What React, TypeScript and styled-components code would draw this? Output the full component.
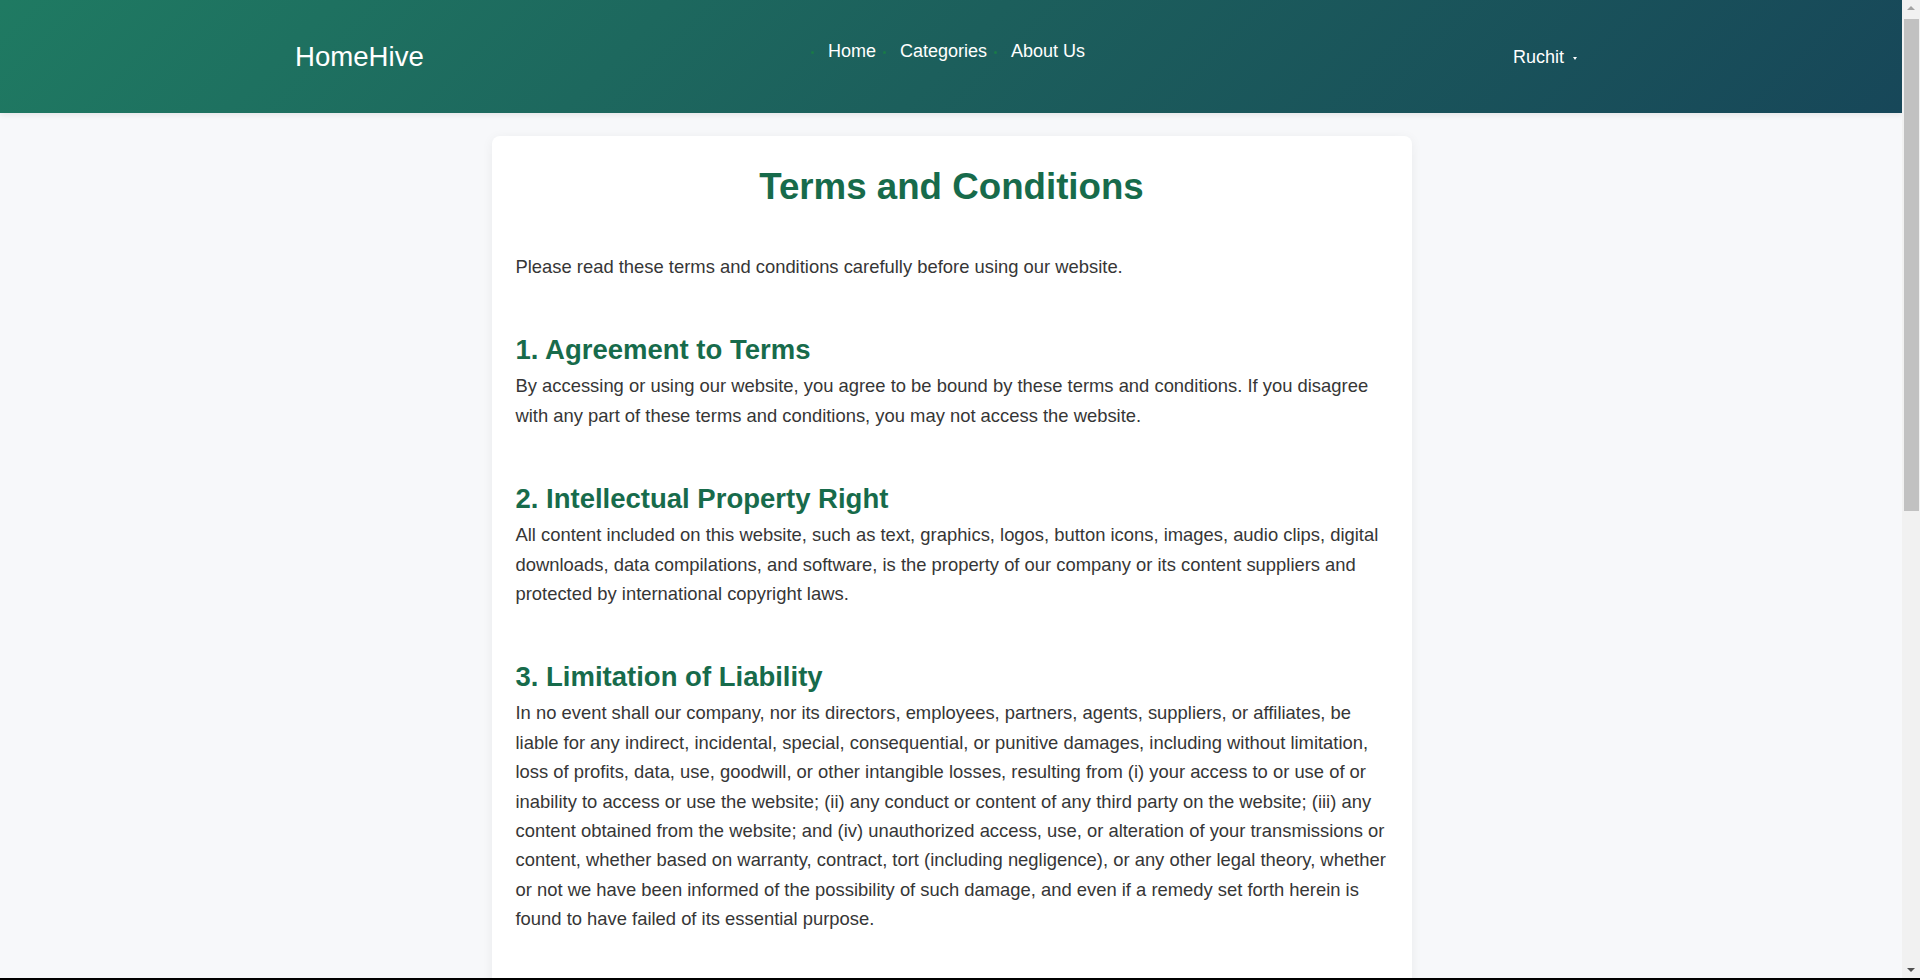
import React from "react";
import styled, { createGlobalStyle } from "styled-components";

const GlobalStyle = createGlobalStyle`
  html, body {
    margin: 0;
    padding: 0;
  }
  body {
    background: #f7f8fa;
    font-family: "Liberation Sans", Arial, Helvetica, sans-serif;
    color: #333333;
    margin-right: 17px;
  }
  * { box-sizing: border-box; }
`;

/* Browser chrome drawn over the page: scrollbar rail and bottom frame edge */
const ScrollRail = styled.div`
  position: fixed;
  top: 0;
  right: 0;
  width: 18px;
  height: 100vh;
  background: #f1f1f1;
  z-index: 10;
`;

const ScrollThumb = styled.div`
  position: absolute;
  top: 19px;
  left: 2px;
  width: 15px;
  height: 492px;
  background: #c1c1c1;
`;

const ScrollArrow = styled.div<{ $down?: boolean }>`
  position: absolute;
  left: 5px;
  width: 0;
  height: 0;
  border-left: 4px solid transparent;
  border-right: 4px solid transparent;
  ${(p) =>
    p.$down
      ? `bottom: 8px; border-top: 4px solid #505050;`
      : `top: 6px; border-bottom: 4px solid #a3a3a3;`}
`;

const FrameEdge = styled.div`
  position: fixed;
  left: 0;
  right: 0;
  bottom: 0;
  height: 2px;
  background: #000000;
  z-index: 11;
`;

const Header = styled.header`
  height: 113px;
  background: linear-gradient(135deg, #1f7a62 0%, #1c5f5c 50%, #174759 100%);
  box-shadow: 0 2px 6px rgba(0, 0, 0, 0.08);
`;

const HeaderInner = styled.div`
  width: 1317px;
  margin: 0 auto;
  padding-top: 41px;
  display: grid;
  grid-template-columns: 535px auto 1fr;
  align-items: start;
`;

const Logo = styled.a`
  font-size: 27.6px;
  line-height: normal;
  color: #ffffff;
  text-decoration: none;
  padding-left: 2px;
`;

const NavList = styled.ul`
  display: flex;
  gap: 24px;
  list-style: none;
  margin: 0;
  padding: 0;
`;

const NavItem = styled.li`
  position: relative;
  &::before {
    content: "";
    position: absolute;
    left: -17px;
    top: 10px;
    width: 3px;
    height: 3px;
    border-radius: 50%;
    background: #1a7a48;
  }
`;

const NavLink = styled.a`
  font-size: 18px;
  line-height: normal;
  color: #ffffff;
  text-decoration: none;
`;

const UserMenu = styled.div`
  justify-self: end;
  margin-top: 6px;
  padding-right: 33px;
  display: flex;
  align-items: center;
  gap: 9px;
  font-size: 18px;
  line-height: normal;
  color: #ffffff;
`;

const Caret = styled.span`
  width: 0;
  height: 0;
  border-top: 3px solid #ffffff;
  border-left: 2.5px solid transparent;
  border-right: 2.5px solid transparent;
  margin-top: 2px;
`;

const Main = styled.main`
  padding: 23px 0 40px;
`;

const Card = styled.article`
  width: 920px;
  margin: 0 auto;
  background: #ffffff;
  border-radius: 8px;
  box-shadow: 0 2px 12px rgba(0, 0, 0, 0.06);
  padding: 30px 24px 40px;
`;

const Title = styled.h1`
  margin: 0 0 44px;
  text-align: center;
  font-size: 36.7px;
  font-weight: 700;
  line-height: normal;
  color: #176b4b;
`;

const Paragraph = styled.p`
  margin: 0;
  font-size: 18.4px;
  line-height: 29.4px;
  color: #363636;
`;

const Section = styled.section`
  margin-top: 52px;
`;

const SectionTitle = styled.h2`
  margin: 0 0 5px;
  font-size: 27.5px;
  font-weight: 700;
  line-height: 1.2;
  color: #176b4b;
`;

const sections: { title: string; body: string }[] = [
  {
    title: "1. Agreement to Terms",
    body:
      "By accessing or using our website, you agree to be bound by these terms and conditions. If you disagree with any part of these terms and conditions, you may not access the website.",
  },
  {
    title: "2. Intellectual Property Right",
    body:
      "All content included on this website, such as text, graphics, logos, button icons, images, audio clips, digital downloads, data compilations, and software, is the property of our company or its content suppliers and protected by international copyright laws.",
  },
  {
    title: "3. Limitation of Liability",
    body:
      "In no event shall our company, nor its directors, employees, partners, agents, suppliers, or affiliates, be liable for any indirect, incidental, special, consequential, or punitive damages, including without limitation, loss of profits, data, use, goodwill, or other intangible losses, resulting from (i) your access to or use of or inability to access or use the website; (ii) any conduct or content of any third party on the website; (iii) any content obtained from the website; and (iv) unauthorized access, use, or alteration of your transmissions or content, whether based on warranty, contract, tort (including negligence), or any other legal theory, whether or not we have been informed of the possibility of such damage, and even if a remedy set forth herein is found to have failed of its essential purpose.",
  },
  {
    title: "4. Governing Law",
    body:
      "These terms and conditions shall be governed and construed in accordance with the laws of the jurisdiction in which our company is established, without regard to its conflict of law provisions.",
  },
  {
    title: "5. Changes to Terms",
    body:
      "We reserve the right, at our sole discretion, to modify or replace these terms and conditions at any time. If a revision is material, we will provide at least 30 days notice prior to any new terms taking effect. What constitutes a material change will be determined at our sole discretion.",
  },
  {
    title: "6. Termination",
    body:
      "We may terminate or suspend your access to the website immediately, without prior notice or liability, for any reason whatsoever, including without limitation if you breach these terms and conditions.",
  },
  {
    title: "7. Contact Us",
    body:
      "If you have any questions about these terms and conditions, please contact us through the contact details provided on our website.",
  },
];

export default function App() {
  return (
    <>
      <GlobalStyle />
      <Header>
        <HeaderInner>
          <Logo href="#">HomeHive</Logo>
          <nav>
            <NavList>
              <NavItem>
                <NavLink href="#">Home</NavLink>
              </NavItem>
              <NavItem>
                <NavLink href="#">Categories</NavLink>
              </NavItem>
              <NavItem>
                <NavLink href="#">About Us</NavLink>
              </NavItem>
            </NavList>
          </nav>
          <UserMenu>
            <span>Ruchit</span>
            <Caret />
          </UserMenu>
        </HeaderInner>
      </Header>
      <Main>
        <Card>
          <Title>Terms and Conditions</Title>
          <Paragraph>
            Please read these terms and conditions carefully before using our website.
          </Paragraph>
          {sections.map((s) => (
            <Section key={s.title}>
              <SectionTitle>{s.title}</SectionTitle>
              <Paragraph>{s.body}</Paragraph>
            </Section>
          ))}
        </Card>
      </Main>
      <ScrollRail>
        <ScrollArrow />
        <ScrollThumb />
        <ScrollArrow $down />
      </ScrollRail>
      <FrameEdge />
    </>
  );
}
